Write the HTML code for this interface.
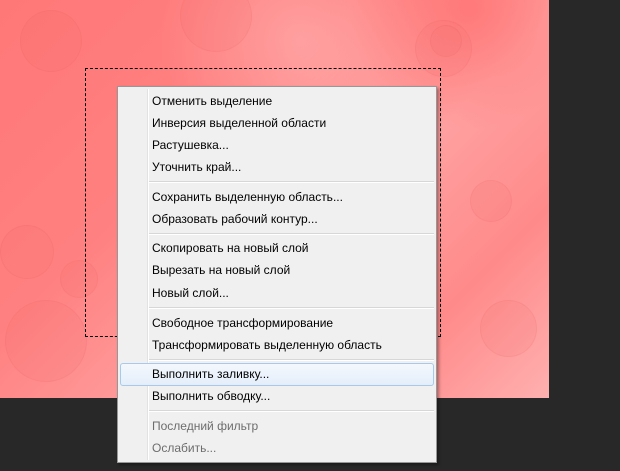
<!DOCTYPE html>
<html><head><meta charset="utf-8"><style>
body{margin:0;width:620px;height:471px;background:#282828;position:relative;overflow:hidden;font-family:"Liberation Sans","DejaVu Sans",sans-serif;}
.bg{position:absolute;left:0;top:0;width:549px;height:398px;background:linear-gradient(135deg,#ff7878 0%,#ff8080 35%,#ffa0a0 60%,#ff8a8a 80%,#ffb0b0 100%);}
.bg2{position:absolute;left:0;top:0;width:549px;height:398px;background:radial-gradient(circle at 470px 10px,rgba(255,110,110,.7),transparent 120px),radial-gradient(circle at 300px 40px,rgba(255,190,190,.5),transparent 140px);}
.c{position:absolute;border-radius:50%;background:rgba(240,100,100,.1);border:1px solid rgba(230,90,90,.1);}
.sel{position:absolute;left:85px;top:68px;width:354px;height:267px;border:1px dashed #000;}
.menu{position:absolute;left:117px;top:86px;width:318px;height:375px;background:#f0f0f0;border:1px solid #979797;box-shadow:2px 2px 3px rgba(0,0,0,.35);}
.gut{position:absolute;left:29px;top:2px;bottom:2px;width:1px;background:#e2e2e2;border-right:1px solid #fff;}
.it{position:absolute;left:34px;font-size:12px;color:#000;line-height:22px;height:22px;}
.dis{color:#6d6d6d;}
.sp{position:absolute;left:31px;right:2px;height:1px;background:#d7d7d7;border-bottom:1px solid #fff;}
.hl{position:absolute;left:2px;right:2px;top:276px;height:21px;border:1px solid #a8c8ec;border-radius:3px;background:linear-gradient(#f4f8fd,#e4eefa);}
</style></head><body>
<div class="bg"></div><div class="bg2"></div>
<div class="c" style="left:180px;top:-20px;width:70px;height:70px"></div>
<div class="c" style="left:20px;top:10px;width:60px;height:60px"></div>
<div class="c" style="left:0px;top:225px;width:52px;height:52px"></div>
<div class="c" style="left:5px;top:300px;width:80px;height:80px"></div>
<div class="c" style="left:60px;top:260px;width:36px;height:36px"></div>
<div class="c" style="left:430px;top:25px;width:30px;height:30px"></div>
<div class="c" style="left:415px;top:20px;width:55px;height:55px"></div>
<div class="c" style="left:480px;top:300px;width:55px;height:55px"></div>
<div class="c" style="left:470px;top:180px;width:40px;height:40px"></div>
<div class="sel"></div>
<div class="menu">
<div class="gut"></div>
<div class="hl"></div>
<div class="it" style="top:3px">Отменить выделение</div>
<div class="it" style="top:25px">Инверсия выделенной области</div>
<div class="it" style="top:47px">Растушевка...</div>
<div class="it" style="top:69px">Уточнить край...</div>
<div class="sp" style="top:94px"></div>
<div class="it" style="top:99px">Сохранить выделенную область...</div>
<div class="it" style="top:121px">Образовать рабочий контур...</div>
<div class="sp" style="top:146px"></div>
<div class="it" style="top:150px">Скопировать на новый слой</div>
<div class="it" style="top:172px">Вырезать на новый слой</div>
<div class="it" style="top:195px">Новый слой...</div>
<div class="sp" style="top:220px"></div>
<div class="it" style="top:225px">Свободное трансформирование</div>
<div class="it" style="top:247px">Трансформировать выделенную область</div>
<div class="sp" style="top:272px"></div>
<div class="it" style="top:276px">Выполнить заливку...</div>
<div class="it" style="top:298px">Выполнить обводку...</div>
<div class="sp" style="top:323px"></div>
<div class="it dis" style="top:328px">Последний фильтр</div>
<div class="it dis" style="top:350px">Ослабить...</div>
</div>
</body></html>
